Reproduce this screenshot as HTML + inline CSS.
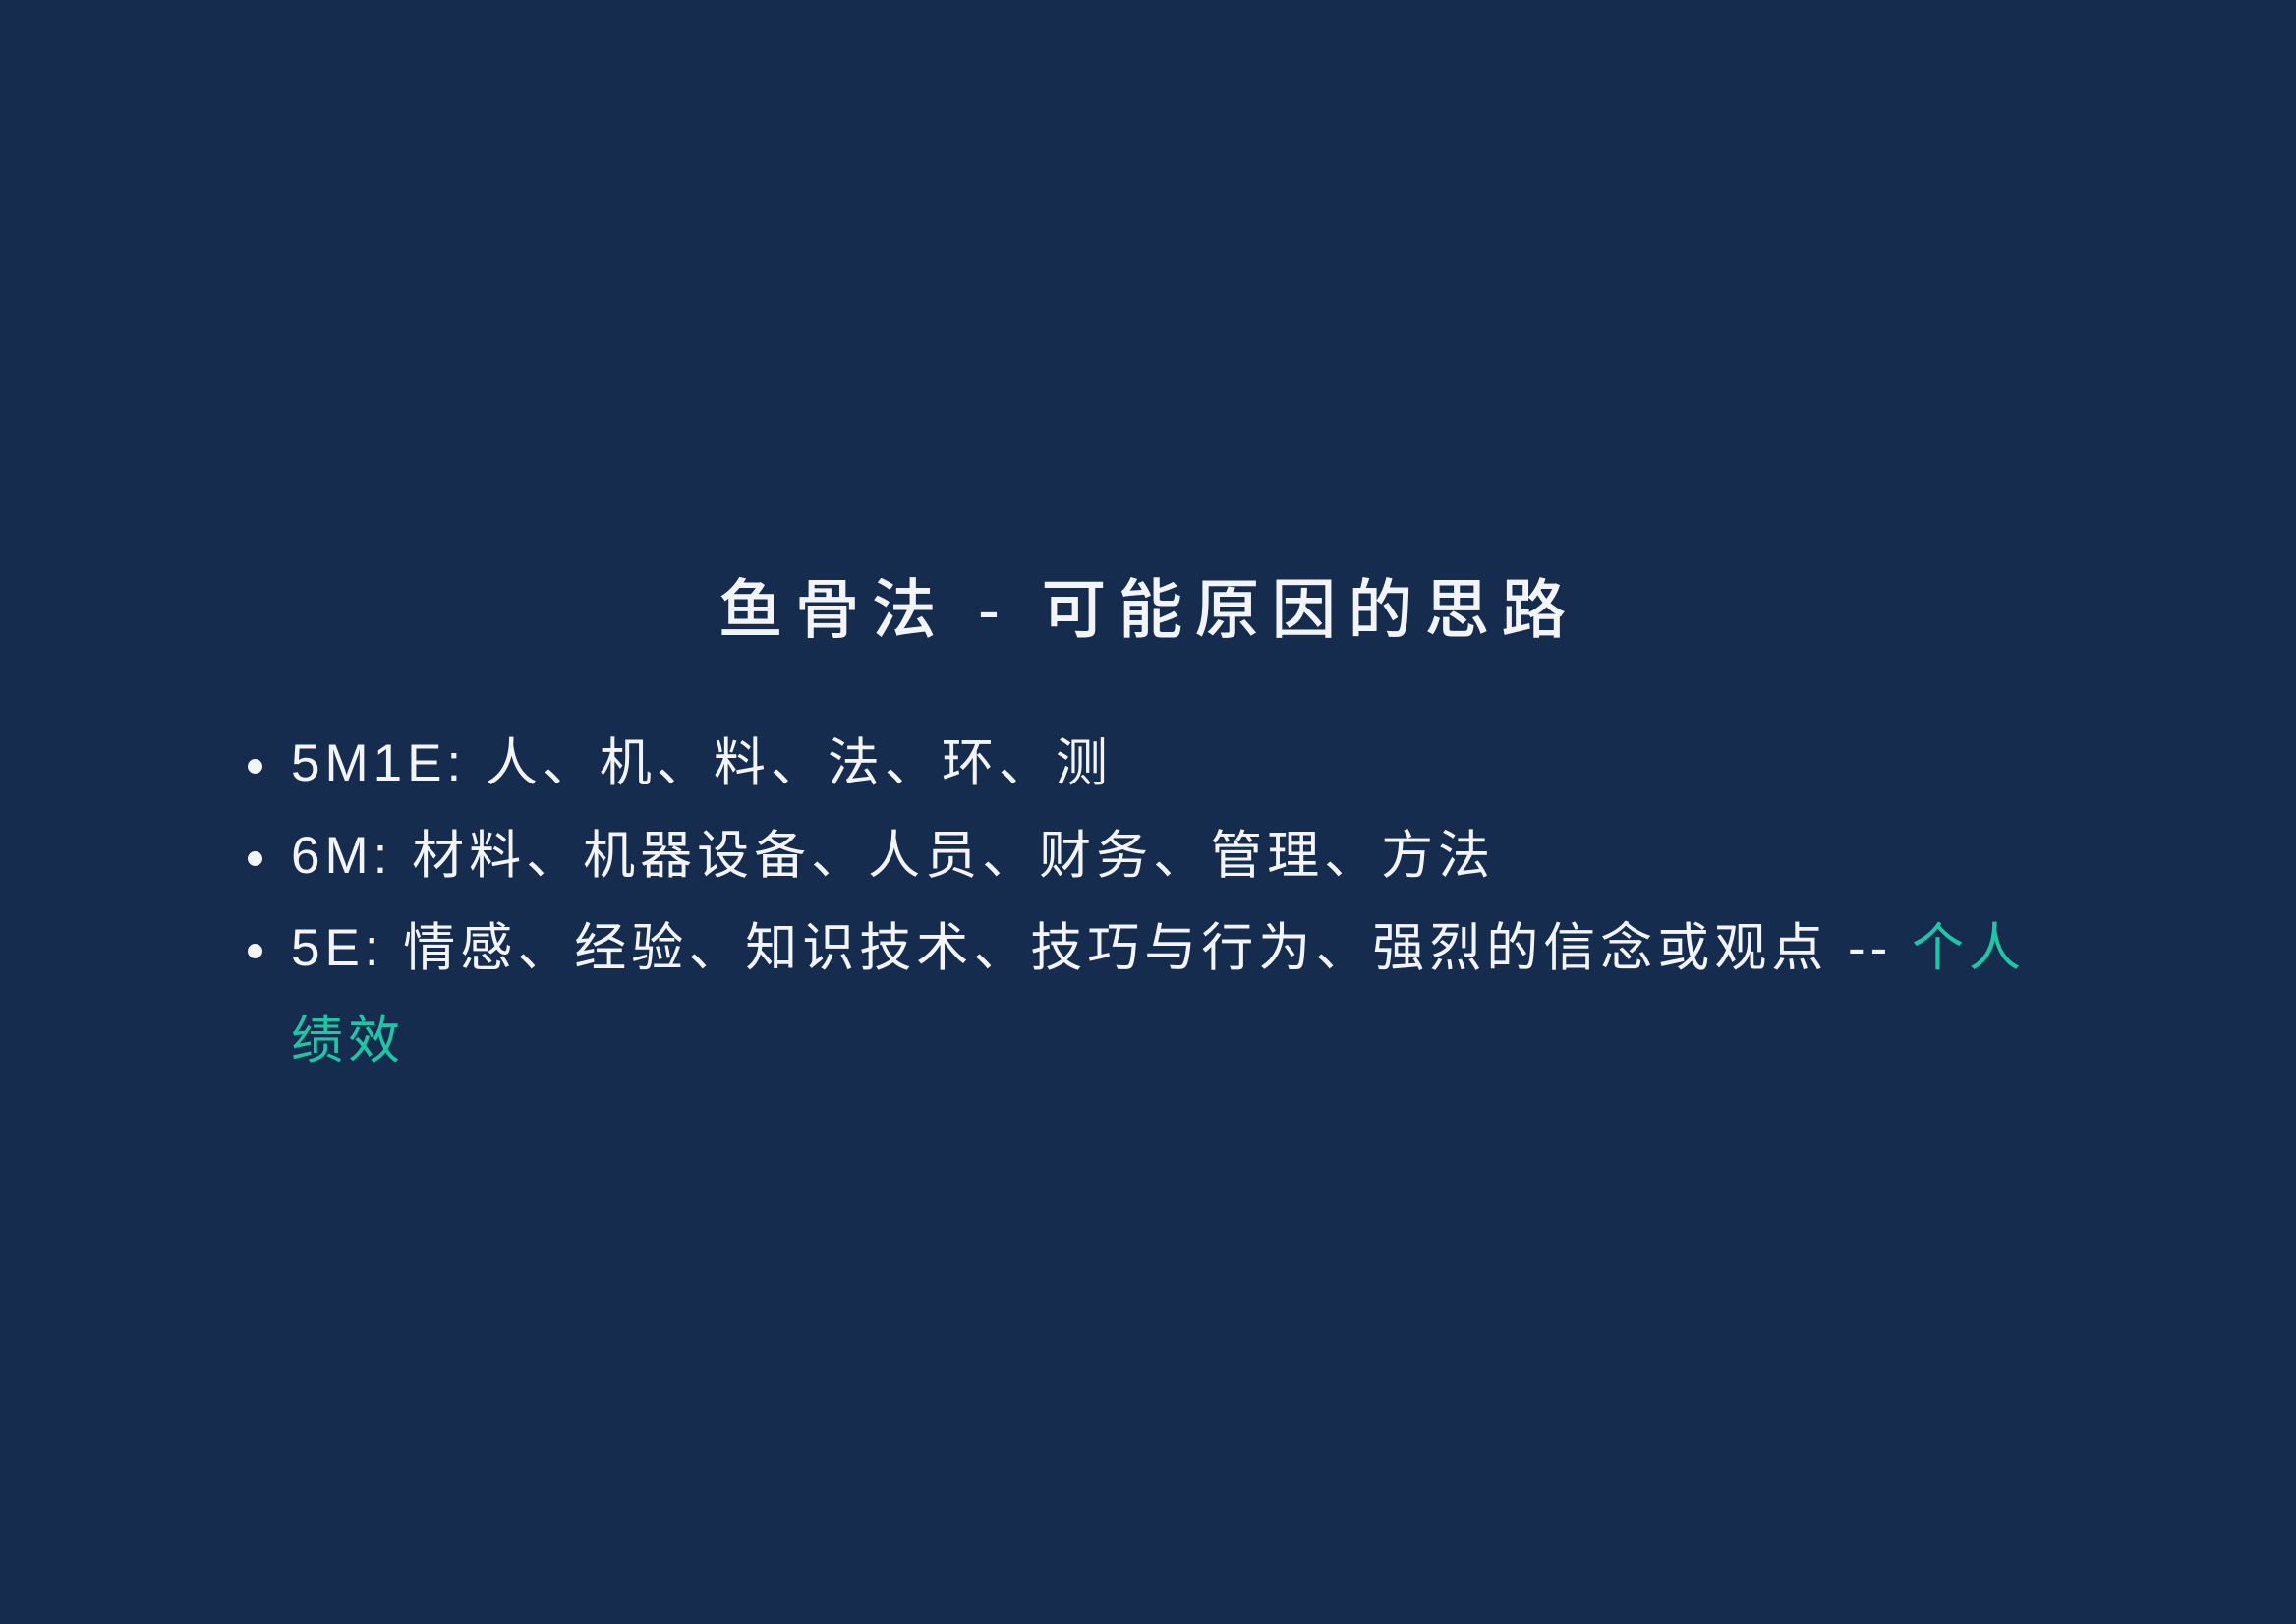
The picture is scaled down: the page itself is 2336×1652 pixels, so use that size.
<!DOCTYPE html>
<html><head><meta charset="utf-8"><style>
html,body{margin:0;padding:0;}
body{width:2336px;height:1652px;background:#162c4f;position:relative;overflow:hidden;font-family:"Liberation Sans","Noto Sans CJK SC",sans-serif;color:#f2f4f7;}
h1{position:absolute;left:0;width:2336px;top:574px;margin:0;text-align:center;font-size:66px;font-weight:500;letter-spacing:12px;line-height:92px;white-space:nowrap;}
ul{position:absolute;left:296px;top:730px;margin:0;padding:0;list-style:none;font-size:53px;letter-spacing:5px;line-height:94px;white-space:nowrap;}
li{position:relative;}
li:before{content:"";position:absolute;left:-44px;top:42px;width:15px;height:15px;border-radius:50%;background:#f2f4f7;}
.t{color:#1fc6a6;}
</style></head><body>
<h1>鱼骨法 - 可能原因的思路</h1>
<ul>
<li>5M1E: 人、机、料、法、环、测</li>
<li>6M: 材料、机器设备、人员、财务、管理、方法</li>
<li>5E: 情感、经验、知识技术、技巧与行为、强烈的信念或观点 -- <span class="t">个人</span><br><span class="t">绩效</span></li>
</ul>
</body></html>
